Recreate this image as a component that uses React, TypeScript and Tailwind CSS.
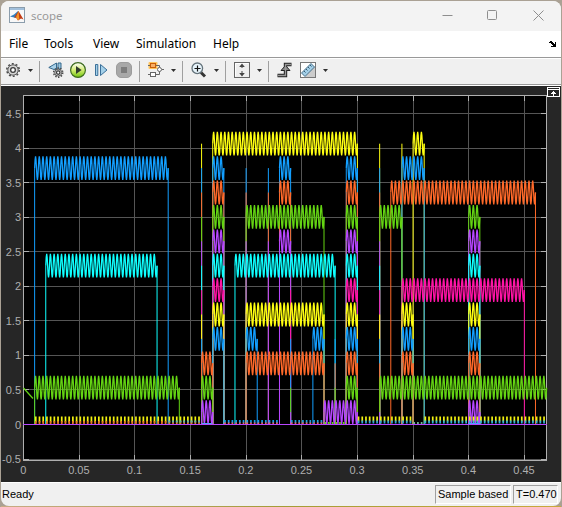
import type { ReactNode } from "react";

const YELLOW = "#ffff11";
const BLUE = "#139fff";
const ORANGE = "#ff6929";
const GREEN = "#64d413";
const PURPLE = "#b746ff";
const CYAN = "#0fffff";
const MAGENTA = "#ff13a6";

type Signal = { color: string; level: number; on: [number, number][]; spikes: number[] };

// Times are in hundredths of a second.
const signals: Signal[] = [
  { color: YELLOW, level: 11, on: [[17, 30], [35, 36]], spikes: [16, 32, 34] },
  { color: BLUE, level: 10, on: [[1, 13], [17, 18], [23, 24], [29, 30], [34, 36]], spikes: [16, 20, 22, 32] },
  { color: ORANGE, level: 9, on: [[17, 18], [23, 24], [29, 30], [33, 46]], spikes: [16, 20, 22, 32] },
  { color: GREEN, level: 8, on: [[17, 18], [20, 27], [29, 30], [32, 34], [40, 41]], spikes: [16] },
  { color: PURPLE, level: 7, on: [[17, 18], [23, 24], [29, 30], [40, 41]], spikes: [16, 20, 22, 32] },
  { color: CYAN, level: 6, on: [[2, 12], [17, 18], [19, 28], [29, 30], [40, 41]], spikes: [16, 32] },
  { color: MAGENTA, level: 5, on: [[17, 18], [29, 30], [34, 45]], spikes: [16, 24, 32] },
  { color: YELLOW, level: 4, on: [[17, 18], [20, 27], [29, 30], [34, 35], [40, 41]], spikes: [16, 32] },
  { color: BLUE, level: 3, on: [[17, 18], [20, 21], [26, 27], [29, 30], [34, 35], [40, 41]], spikes: [16, 24, 28, 32] },
  { color: ORANGE, level: 2, on: [[16, 17], [20, 27], [29, 30], [34, 35], [40, 41]], spikes: [28, 32] },
  { color: GREEN, level: 1, on: [[1, 14], [16, 17], [29, 30], [32, 47]], spikes: [24, 28] },
  { color: PURPLE, level: 0, on: [[16, 17], [27, 30], [40, 41]], spikes: [24, 32] },
];

const BASE = 424.5;
const tx = (t: number) => 23.5 + t * 11.13;
const vy = (v: number) => BASE - v * 69.1;

// Oscillating stretches of a signal.
function wave(s: Signal) {
  const mid = BASE - 24.4 * s.level - 12.4;
  let d = "";
  for (const [a, b] of s.on) {
    const steps = (b - a) * 24;
    for (let k = 0; k <= steps; k++) {
      const y = mid - 11.8 * Math.sin((k * Math.PI) / 4);
      d += `${k ? "L" : "M"}${tx(a + k / 24).toFixed(2)} ${y.toFixed(2)}`;
    }
  }
  return d;
}

// Vertical jumps between the base line and the signal's level.
function jumps(s: Signal) {
  const mid = BASE - 24.4 * s.level - 12.4;
  const times = [...s.spikes, ...s.on.flat()].filter((t) => t < 47);
  return times.map((t) => `M${tx(t)} ${BASE}V${mid}`).join("");
}

const ripples: { from: number; to: number; y: number; h: number; color: string }[] = [
  { from: 1, to: 16, y: 419.5, h: 6, color: "#f2f210" },
  { from: 1, to: 16, y: 422.5, h: 3, color: "#e87825" },
  { from: 13, to: 16, y: 421.5, h: 2, color: "#46b7c4" },
  { from: 18, to: 23, y: 421.5, h: 3, color: "#139fe8" },
  { from: 18, to: 23, y: 423.5, h: 2, color: "#ee6060" },
  { from: 24, to: 27, y: 421.5, h: 3, color: "#20a0dd" },
  { from: 24, to: 27, y: 423.5, h: 2, color: "#ee6060" },
  { from: 27, to: 29, y: 423, h: 2, color: GREEN },
  { from: 30, to: 35, y: 419, h: 5, color: "#f2f210" },
  { from: 30, to: 35, y: 422, h: 3, color: "#30a6dd" },
  { from: 35, to: 36, y: 423, h: 2, color: "#70b999" },
  { from: 36, to: 47, y: 419, h: 5, color: "#f2f210" },
  { from: 36, to: 47, y: 422, h: 3, color: "#30b6dd" },
];

const xTicks = [0, 5, 10, 15, 20, 25, 30, 35, 40, 45];
const yTicks = [-0.5, 0, 0.5, 1, 1.5, 2, 2.5, 3, 3.5, 4, 4.5];

function Plot() {
  return (
    <svg width="560" height="396" viewBox="1 86 560 396" className="block bg-[#262626]">
      <rect x="23" y="95" width="524" height="366" fill="#000" />
      <g stroke="#555" shapeRendering="crispEdges">
        {xTicks.slice(1).map((t) => (
          <line key={t} x1={Math.round(tx(t) - 0.4) + 0.5} x2={Math.round(tx(t) - 0.4) + 0.5} y1="96" y2="460" />
        ))}
        {yTicks.map((v) => (
          <line key={v} x1="24" x2="546" y1={Math.floor(vy(v)) + 0.5} y2={Math.floor(vy(v)) + 0.5} />
        ))}
      </g>
      <g stroke="#afafaf" fill="none" shapeRendering="crispEdges">
        <rect x="23.5" y="95.5" width="523" height="365" />
        {xTicks.slice(1).map((t) => {
          const x = Math.round(tx(t) - 0.4) + 0.5;
          return <path key={t} d={`M${x} 96v5M${x} 460v-5`} />;
        })}
        {yTicks.map((v) => {
          const y = Math.floor(vy(v)) + 0.5;
          return <path key={v} d={`M24 ${y}h5M546 ${y}h-5`} />;
        })}
      </g>
      <g fill="none">
        {signals.map((s) => (
          <g key={s.level} stroke={s.color}>
            <path d={jumps(s)} strokeWidth="1" />
            <path d={wave(s)} strokeWidth="1.3" strokeLinejoin="bevel" />
          </g>
        ))}
        <path d="M23.5 388L33 398.5" stroke={GREEN} strokeWidth="1.2" />
        {ripples.map((r, i) => (
          <path key={i} d={`M${tx(r.from) + 0.3} ${r.y}H${tx(r.to)}`} stroke={r.color} strokeWidth={r.h} strokeDasharray="1.7 2.01" />
        ))}
        <path d="M202 423.5h10M468 423.5h12" stroke="#4f9fff" />
        <path d="M23 424.5H547" stroke={PURPLE} />
      </g>
      <g fill="#afafaf" fontSize="11" fontFamily="Liberation Sans, Arial, sans-serif">
        {yTicks.map((v) => (
          <text key={v} x="21" y={vy(v) + 4} textAnchor="end">{v}</text>
        ))}
        {xTicks.map((t) => (
          <text key={t} x={tx(t) - 0.3} y="474" textAnchor="middle">{t / 100}</text>
        ))}
      </g>
      <g stroke="#fff" fill="none" shapeRendering="crispEdges">
        <path d="M547.5 87.5h12v9h-12zM548 89.5h11" />
        <path d="M553.5 91v5M552 92.5h3M551 93.5h5" />
      </g>
    </svg>
  );
}

function Icon({ w = 16, className = "", children }: { w?: number; className?: string; children: ReactNode }) {
  return (
    <svg width={w} height="16" viewBox={`0 0 ${w} 16`} fill="none" className={`shrink-0 ${className}`}>
      {children}
    </svg>
  );
}

const Caret = ({ className }: { className: string }) => (
  <svg width="5" height="3" viewBox="0 0 5 3" className={`mb-px shrink-0 ${className}`}><path d="M0 0h5L2.5 3z" fill="#303030" /></svg>
);
const Sep = ({ className }: { className: string }) => <div className={`h-[21px] w-px shrink-0 bg-[#a0a0a0] ${className}`} />;

function Cog({ cx, cy, r }: { cx: number; cy: number; r: number }) {
  const tooth = (2 * Math.PI * r) / 20;
  return (
    <g>
      <circle cx={cx} cy={cy} r={r} stroke="#4b4b4b" strokeWidth="1.6" strokeDasharray={`${tooth} ${tooth}`} />
      <circle cx={cx} cy={cy} r={r - 1} fill="#d4d4d4" stroke="#5a5a5a" />
      <circle cx={cx} cy={cy} r={r * 0.38} fill="#fff" stroke="#3c3c3c" strokeWidth="1.3" />
    </g>
  );
}

function Toolbar() {
  return (
    <div className="flex h-[26px] items-center border-t border-white bg-[#f0f0f0] pb-px">
      <Icon w={14} className="mb-0.5 ml-[5px]"><Cog cx={7} cy={8} r={6.2} /></Icon>
      <Caret className="ml-2" />
      <Sep className="ml-1.5" />
      <Icon className="mb-0.5 ml-2">
        <path d="M8.500 1v7.500L.8 5.500z" fill="#a9d2ea" stroke="#35688c" />
        <path d="M10 1h3v6h-3z" fill="#9bc8e2" stroke="#35688c" />
        <Cog cx={10.2} cy={10.6} r={4.5} />
      </Icon>
      <Icon className="mb-0.5 ml-1.5">
        <defs>
          <linearGradient id="play" x2="0" y2="1"><stop stopColor="#fff" /><stop offset=".5" stopColor="#d4ed75" /><stop offset="1" stopColor="#71c50b" /></linearGradient>
        </defs>
        <circle cx="8" cy="8" r="7.4" fill="url(#play)" stroke="#3e6c21" strokeWidth="1.2" />
        <path d="M6 4l5.600 4L6 12z" fill="#303b2c" />
      </Icon>
      <Icon w={14} className="mb-0.5 ml-2">
        <path d="M1.500 2.500h2.300v11H1.500zM6.500 2.500L13 8l-6.500 5.500z" fill="#a4d0e9" stroke="#3a6f99" />
      </Icon>
      <Icon className="mb-0.5 ml-2">
        <rect x=".5" y=".5" width="15" height="15" rx="4.500" fill="#a8a8a8" stroke="#9c9c9c" />
        <rect x="5" y="5" width="6" height="6" fill="#7c7c7c" />
      </Icon>
      <Sep className="ml-[7px]" />
      <Icon className="mb-0.5 ml-2">
        <rect x=".5" y="0" width="9" height="7" rx="1" fill="#ffc35b" />
        <rect x="2.500" y="1.500" width="5" height="4" fill="#f8af67" stroke="#c75f0b" />
        <path d="M0 3.500h2M8 3.500h3.500v2M11.500 9v3.500H8M0 12.500h2M14 7.500h2" stroke="#666" />
        <rect x="2.500" y="10.500" width="5" height="4" fill="#fff" stroke="#666" />
        <circle cx="11.500" cy="7.500" r="2" fill="#fff" stroke="#666" />
      </Icon>
      <Caret className="ml-[7px]" />
      <Sep className="ml-1.5" />
      <Icon className="mb-0.5 ml-2">
        <path d="M10 10.500l4 4" stroke="#343434" strokeWidth="3" />
        <circle cx="6.300" cy="6.300" r="5.300" fill="#e7f4fb" stroke="#66747c" strokeWidth="1.300" />
        <path d="M3.500 6.500h6M6.500 3.500v6" stroke="#111" strokeWidth="1.200" />
      </Icon>
      <Caret className="ml-[7px]" />
      <Sep className="ml-1.5" />
      <Icon className="mb-0.5 ml-2">
        <rect x=".5" y=".5" width="15" height="15" fill="#eee" stroke="#666" />
        <path d="M1.500 14.500v-13h13" stroke="#fff" />
        <path d="M8 1.500L10.800 5H5.200zM8 14.500L10.800 11H5.200z" fill="#444" />
        <path d="M8 4v3M8 9v3" stroke="#444" strokeDasharray="2 1" />
      </Icon>
      <Caret className="ml-[7px]" />
      <Sep className="ml-1.5" />
      <Icon className="mb-0.5 ml-2">
        <path d="M.5 13.500h8v-11h6" stroke="#222" strokeWidth="3.400" />
        <path d="M8.500 3.500l4.500 5H4z" fill="#888" stroke="#222" />
        <path d="M1 13.500h7.500v-11H14" stroke="#999" strokeWidth="1.400" />
      </Icon>
      <Icon className="mb-0.5 ml-[7px]">
        <rect x=".5" y=".5" width="15" height="15" fill="#fff" stroke="#777" />
        <path d="M15 4v11H5z" fill="#ccc" />
        <path d="M1.500 11l9.500-9.500 3.500 3.500L5 14.500z" fill="#a3cfe8" stroke="#426b83" />
        <path d="M4 9l1.500 1.500M6 7l1.500 1.500M8 5l1.500 1.500M10 3l1.500 1.500" stroke="#345b73" />
      </Icon>
      <Caret className="ml-[7px]" />
    </div>
  );
}

export default function App() {
  return (
    <div className="h-[507px] w-[562px] overflow-hidden bg-[#aaa194] px-px pt-px font-['Liberation_Sans',Arial,sans-serif]">
      <div className="flex h-[505px] w-[560px] flex-col overflow-hidden rounded-lg bg-[#f0f0f0]">
        <header className="flex h-[30px] items-center bg-[#f3f3f3] font-['Noto_Sans','Open_Sans',sans-serif] text-[11.5px] text-[#999]">
          <Icon className="mb-0.5 ml-2">
            <rect x=".5" y=".5" width="15" height="15" fill="#f8f8f8" stroke="#8b9dac" />
            <path d="M1 1h14v2H1z" fill="#a2c0dc" />
            <path d="M1 9.500l4-2 4-3.500 1.500 3L7 11z" fill="#3380bd" />
            <path d="M5 10.500L9.500 4l1.500 2.500 3.500 6-2.500-1-3 2-2-3z" fill="#c23b15" />
            <path d="M9.500 4l.8 8-1.300 1.500-2-3.200z" fill="#f29527" />
          </Icon>
          <span className="ml-1.5 grow">scope</span>
          <svg width="102" height="12" viewBox="0 0 102 12" fill="none" stroke="#8e8e8e" className="mb-[3px] mr-[17px]">
            <path d="M.5 6.500h10M91.500 1.500l10 10M101.500 1.500l-10 10" />
            <rect x="45.500" y="1.500" width="9" height="9" rx="1" />
          </svg>
        </header>
        <nav className="flex h-[26px] items-center bg-white font-['Noto_Sans','Open_Sans',sans-serif] text-xs text-black">
          <span className="ml-2 w-[35px]">File</span>
          <span className="w-[49px]">Tools</span>
          <span className="w-[43px]">View</span>
          <span className="w-[77px]">Simulation</span>
          <span className="grow">Help</span>
          <svg width="7" height="6" viewBox="0 0 7 6" className="mb-px mr-[5px]" shapeRendering="crispEdges">
            <path d="M0 1h1V0h2v1h1v1h1v1h1V1h1v5H2V5h2V4H3V3H2V2H0z" fill="#000" />
          </svg>
        </nav>
        <div className="h-px shrink-0 bg-[#999]" />
        <Toolbar />
        <div className="h-px shrink-0 bg-[#999]" />
        <div className="h-px shrink-0 bg-white" />
        <main className="shrink-0"><Plot /></main>
        <footer className="flex h-6 items-center border-t border-white text-[11px] leading-none text-black">
          <span className="ml-px grow">Ready</span>
          <span className="flex h-[19px] w-[76px] items-center border border-b-white border-l-[#a0a0a0] border-r-white border-t-[#a0a0a0] pl-0.5 whitespace-nowrap">Sample based</span>
          <span className="ml-0.5 mr-[3px] flex h-[19px] w-[45px] items-center border border-b-white border-l-[#a0a0a0] border-r-white border-t-[#a0a0a0] pl-0.5 whitespace-nowrap">T=0.470</span>
        </footer>
      </div>
      <div className="h-px bg-gradient-to-r from-[#c8aa83] via-[#a49c35] to-[#c9a83b]" />
    </div>
  );
}
